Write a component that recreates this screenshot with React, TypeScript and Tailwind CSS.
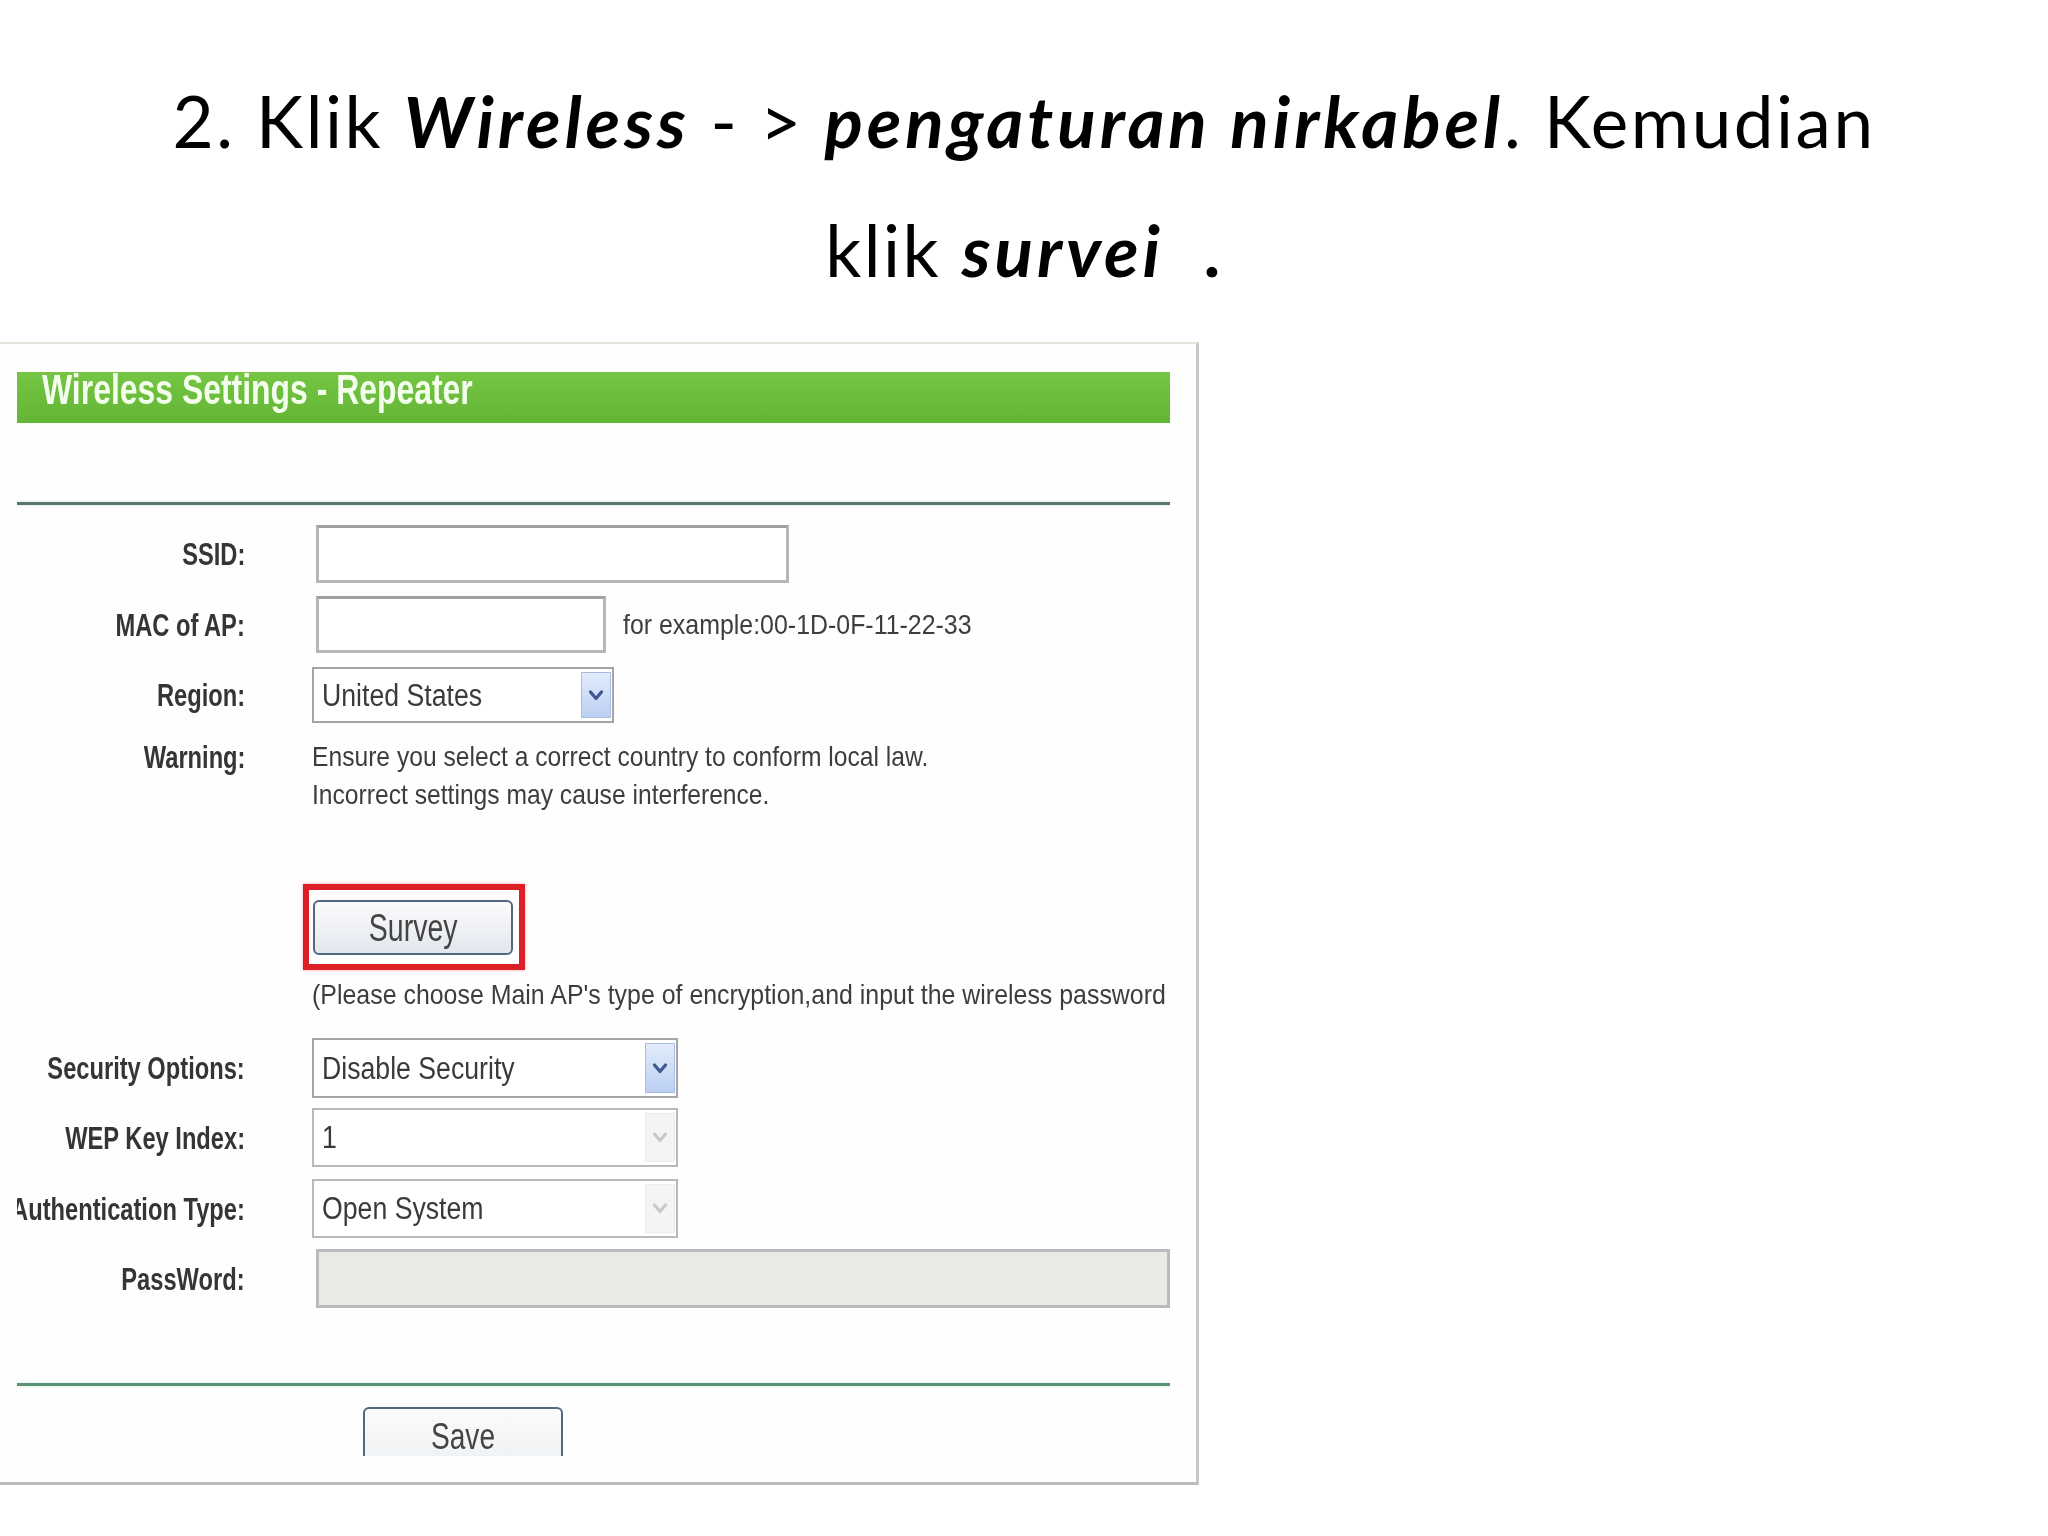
import React from "react";

function Chevron({ disabled }: { disabled?: boolean }) {
  return (
    <svg width="16" height="13" viewBox="0 0 16 13" fill="none">
      <path
        d="M2.5 3 L8 9.5 L13.5 3"
        stroke={disabled ? "#c9c9c9" : "#3d5891"}
        strokeWidth="3.2"
        strokeLinecap="round"
        strokeLinejoin="round"
      />
    </svg>
  );
}

function Label({ text }: { text: string }) {
  return (
    <div className="w-[228px] shrink-0 flex justify-end items-center">
      <span className="inline-block origin-right scale-x-[0.74] whitespace-nowrap font-bold text-[32px] leading-none text-[#353535]">
        {text}
      </span>
    </div>
  );
}

function Select({
  value,
  disabled,
  className,
}: {
  value: string;
  disabled?: boolean;
  className: string;
}) {
  return (
    <div
      className={`flex h-full border-2 bg-white ${
        disabled ? "border-[#b9b9b9]" : "border-[#a4a4a4]"
      } ${className}`}
    >
      <div className="flex-1 flex items-center pl-[8px] overflow-visible">
        <span className="inline-block origin-left scale-x-[0.86] whitespace-nowrap text-[31px] leading-none text-[#3a3a3a]">
          {value}
        </span>
      </div>
      <div
        className={`w-[30px] my-[3px] mr-[1px] flex items-center justify-center border ${
          disabled
            ? "bg-[#f4f4f4] border-[#ececec]"
            : "bg-linear-to-b from-[#e2ecfc] to-[#bcd0f2] border-[#a9bde2]"
        }`}
      >
        <Chevron disabled={disabled} />
      </div>
    </div>
  );
}

export default function App() {
  return (
    <div className="w-[2048px] h-[1536px] bg-white overflow-hidden">
      <div className="pt-[56px] text-center text-[71px] leading-[129px] tracking-[2.5px] text-black font-['Lato',sans-serif]">
        <div className="whitespace-nowrap">
          2. Klik <span className="font-bold italic tracking-[4px]">Wireless</span> - &gt;{" "}
          <span className="font-bold italic tracking-[4px]">pengaturan nirkabel</span>. Kemudian
        </div>
        <div className="whitespace-nowrap">
          klik <span className="font-bold italic tracking-[4px]">survei</span>
          <span className="font-bold">&nbsp; .</span>
        </div>
      </div>

      <div className="mt-[28px] w-[1199px] h-[1143px] border-t-2 border-r-[3px] border-b-[3px] border-t-[#e4e4dc] border-r-[#c6c6c6] border-b-[#bcbcbc] bg-[#fefefe] font-['Liberation_Sans',Arial,sans-serif] blur-[0.5px]">
        <div className="ml-[17px] w-[1153px] h-[1112px] overflow-hidden flex flex-col">
          {/* Green title bar */}
          <div className="mt-[28px] h-[51px] shrink-0 bg-linear-to-b from-[#76c545] to-[#63b535] pl-[25px] leading-[36px]">
            <span className="inline-block origin-left scale-x-[0.76] whitespace-nowrap font-bold text-[42px] text-[#f3ffec]">
              Wireless Settings - Repeater
            </span>
          </div>

          {/* separator */}
          <div className="mt-[79px] h-[3px] shrink-0 bg-[#587a69] shadow-[0_0_3px_#c9e3d3]" />

          {/* SSID */}
          <div className="mt-[20px] h-[58px] shrink-0 flex">
            <Label text="SSID:" />
            <div className="ml-[71px] w-[473px] h-full border-[3px] border-[#b6b6b6] border-t-[#a0a0a0] bg-white" />
          </div>

          {/* MAC */}
          <div className="mt-[13px] h-[57px] shrink-0 flex">
            <Label text="MAC of AP:" />
            <div className="ml-[71px] w-[290px] h-full border-[3px] border-[#b6b6b6] border-t-[#a0a0a0] bg-white" />
            <div className="ml-[17px] flex items-center">
              <span className="inline-block origin-left scale-x-[0.89] whitespace-nowrap text-[28px] leading-none text-[#3d3d3d]">
                for example:00-1D-0F-11-22-33
              </span>
            </div>
          </div>

          {/* Region */}
          <div className="mt-[14px] h-[56px] shrink-0 flex">
            <Label text="Region:" />
            <div className="ml-[67px] h-full">
              <Select value="United States" className="w-[302px]" />
            </div>
          </div>

          {/* Warning */}
          <div className="mt-[15px] shrink-0 flex items-start">
            <div className="h-[38px] flex">
              <Label text="Warning:" />
            </div>
            <div className="ml-[67px] flex flex-col text-[28px] leading-[38px] text-[#3d3d3d]">
              <div>
                <span className="inline-block origin-left scale-x-[0.88] whitespace-nowrap">
                  Ensure you select a correct country to conform local law.
                </span>
              </div>
              <div>
                <span className="inline-block origin-left scale-x-[0.88] whitespace-nowrap">
                  Incorrect settings may cause interference.
                </span>
              </div>
            </div>
          </div>

          {/* Survey button with red highlight */}
          <div className="mt-[70px] shrink-0 flex">
            <div className="w-[228px] shrink-0" />
            <div className="ml-[58px] w-[222px] h-[86px] border-[6px] border-[#dc1f26] pt-[10px] pb-[9px] pl-[4px] pr-[6px] shadow-[0_0_3px_#f3a0a0]">
              <div className="w-[200px] h-[55px] rounded-[6px] border-2 border-[#53677f] bg-linear-to-b from-[#fbfbfb] to-[#e2e7ee] flex items-center justify-center">
                <span className="inline-block scale-x-[0.75] whitespace-nowrap text-[38px] leading-none text-[#444]">
                  Survey
                </span>
              </div>
            </div>
          </div>

          {/* Hint */}
          <div className="mt-[6px] h-[38px] shrink-0 flex">
            <div className="w-[228px] shrink-0" />
            <div className="ml-[67px] text-[28px] leading-[38px] text-[#3d3d3d]">
              <span className="inline-block origin-left scale-x-[0.89] whitespace-nowrap">
                (Please choose Main AP's type of encryption,and input the wireless password
              </span>
            </div>
          </div>

          {/* Security Options */}
          <div className="mt-[24px] h-[60px] shrink-0 flex">
            <Label text="Security Options:" />
            <div className="ml-[67px] h-full">
              <Select value="Disable Security" className="w-[366px]" />
            </div>
          </div>

          {/* WEP Key Index */}
          <div className="mt-[10px] h-[59px] shrink-0 flex">
            <Label text="WEP Key Index:" />
            <div className="ml-[67px] h-full">
              <Select value="1" disabled className="w-[366px]" />
            </div>
          </div>

          {/* Authentication Type */}
          <div className="mt-[12px] h-[59px] shrink-0 flex">
            <Label text="Authentication Type:" />
            <div className="ml-[67px] h-full">
              <Select value="Open System" disabled className="w-[366px]" />
            </div>
          </div>

          {/* Password */}
          <div className="mt-[11px] h-[59px] shrink-0 flex">
            <Label text="PassWord:" />
            <div className="ml-[71px] flex-1 h-full border-[3px] border-[#b7bbbb] bg-[#ebe9e5]" />
          </div>

          {/* separator */}
          <div className="mt-[75px] h-[3px] shrink-0 bg-[#5c9477] shadow-[0_0_3px_#c9eedb]" />

          {/* Save */}
          <div className="mt-[21px] shrink-0 flex">
            <div className="ml-[346px] w-[200px] h-[60px] rounded-t-[6px] border-2 border-[#53677f] bg-linear-to-b from-[#fbfbfb] to-[#eef1f4] flex items-center justify-center">
              <span className="inline-block scale-x-[0.78] whitespace-nowrap text-[36px] leading-none text-[#444]">
                Save
              </span>
            </div>
          </div>
        </div>
      </div>
    </div>
  );
}
